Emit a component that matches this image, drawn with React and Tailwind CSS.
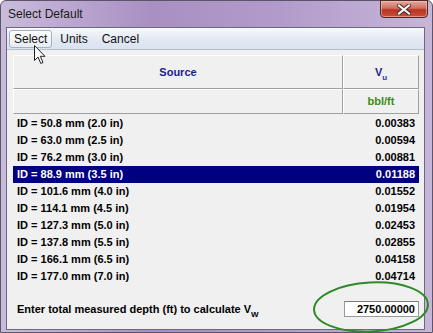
import React from 'react';

const rows = [
    ['ID = 50.8 mm (2.0 in)', '0.00383'],
    ['ID = 63.0 mm (2.5 in)', '0.00594'],
    ['ID = 76.2 mm (3.0 in)', '0.00881'],
    ['ID = 88.9 mm (3.5 in)', '0.01188'],
    ['ID = 101.6 mm (4.0 in)', '0.01552'],
    ['ID = 114.1 mm (4.5 in)', '0.01954'],
    ['ID = 127.3 mm (5.0 in)', '0.02453'],
    ['ID = 137.8 mm (5.5 in)', '0.02855'],
    ['ID = 166.1 mm (6.5 in)', '0.04158'],
    ['ID = 177.0 mm (7.0 in)', '0.04714'],
];

const selected = 3;

export default function App() {
    return (
        <div className="relative w-[433px] h-[333px] overflow-hidden bg-white">
            <div className="flex flex-col w-[433px] h-[333px] rounded-tl-[6px] rounded-tr-[6px] border border-[#5d536b] bg-[linear-gradient(to_right,#c9bcda,#a98fc3_35%,#b29bcb_65%,#c6b6d8)]">
                {/* Title bar */}
                <div className="flex items-start h-[26px] shrink-0">
                    <span className="pl-[7px] pt-[6px] text-[12px] leading-[14px] text-[#1b1b1b] font-['Liberation_Sans',sans-serif]">Select Default</span>
                    <div className="ml-auto mr-[4px] w-[48px] h-[18px] -mt-px rounded-b-[4px] border border-[#4d2a2a] bg-[linear-gradient(to_bottom,#e7a79a,#d0705f_45%,#b8341f_55%,#c8503a)] flex items-center justify-center shadow-[inset_0_0_0_1px_rgba(255,210,200,0.5)]">
                        <svg width="14" height="11" viewBox="0 0 14 11">
                            <path d="M2 1.5 L12 9.5 M12 1.5 L2 9.5" stroke="#3a2a2a" strokeWidth="4" strokeLinecap="square" />
                            <path d="M2 1.5 L12 9.5 M12 1.5 L2 9.5" stroke="#f4f4f4" strokeWidth="2.2" strokeLinecap="square" />
                        </svg>
                    </div>
                </div>

                <div className="flex flex-1 min-h-0">
                    <div className="w-[6px] shrink-0 border-r border-[#6e6380]" />
                    <div className="flex flex-col w-[418px] border border-[#6a6a7a] border-l-0">
                        {/* Menu bar */}
                        <div className="flex items-center h-[22px] shrink-0 bg-[linear-gradient(to_bottom,#f7f9fc,#e4eaf4_50%,#d9e2ef)] border-b border-[#b7bfcd] text-[12px] text-[#111] font-['Liberation_Sans',sans-serif] pl-[2px]">
                            <div className="h-[18px] px-[4px] flex items-center rounded-[3px] border border-[#a8b1c0] bg-[linear-gradient(to_bottom,#fbfcfd,#e8ecf2)]">Select</div>
                            <div className="pl-[8px] pr-[8px]">Units</div>
                            <div className="pl-[6px]">Cancel</div>
                        </div>

                        {/* Content */}
                        <div className="flex-1 bg-[#f0f0f0] pl-[6px] pr-[5px] pt-[5px] font-['Liberation_Sans',sans-serif] text-[11px] font-bold">
                            <div className="flex h-[34px]">
                                <div className="w-[330px] flex items-center justify-center border-t border-l border-white border-b border-r border-b-[#a0a0a0] border-r-[#a0a0a0] text-[#1c1c8e]">Source</div>
                                <div className="flex-1 flex items-center justify-center border-t border-l border-white border-b border-r border-b-[#a0a0a0] border-r-[#a0a0a0] text-[#1c1c8e]">
                                    <span>V<sub className="text-[8px] text-[#3a2fb0] align-[-2px]">u</sub></span>
                                </div>
                            </div>
                            <div className="flex h-[25px]">
                                <div className="w-[330px] border-t border-l border-white border-b border-r border-b-[#a0a0a0] border-r-[#a0a0a0]" />
                                <div className="flex-1 flex items-center justify-center border-t border-l border-white border-b border-r border-b-[#a0a0a0] border-r-[#a0a0a0] text-[#3b8a12]">bbl/ft</div>
                            </div>
                            <div className="mt-px">
                                {rows.map(([label, value], i) => (
                                    <div
                                        key={label}
                                        className={`flex items-center justify-between h-[17px] pl-[4px] pr-[4px] ${i === selected ? 'bg-[#000080] text-white' : 'text-black'}`}
                                    >
                                        <span>{label}</span>
                                        <span>{value}</span>
                                    </div>
                                ))}
                            </div>
                            <div className="flex items-center justify-between mt-[16px] pl-[4px]">
                                <span>Enter total measured depth (ft) to calculate V<sub className="text-[8px] align-[-2px]">W</sub></span>
                                <div className="w-[75px] h-[16px] border border-[#9a9a9a] border-t-[#7a7a7a] bg-white flex items-center justify-end pr-[3px]">2750.00000</div>
                            </div>
                        </div>
                    </div>
                    <div className="flex-1" />
                </div>
                <div className="h-[2px] shrink-0" />
            </div>

            {/* Green annotation ellipse */}
            <svg className="absolute left-0 top-0 pointer-events-none" width="433" height="333">
                <ellipse cx="371" cy="307" rx="57" ry="24.5" fill="none" stroke="#2e8a26" strokeWidth="2" transform="rotate(-3 371 307)" />
            </svg>

            {/* Mouse cursor */}
            <svg className="absolute left-[34px] top-[45px]" width="13" height="20" viewBox="0 0 13 20">
                <path d="M0.5 0.5 L0.5 15.5 L4 12 L6.8 18.5 L9 17.5 L6.3 11.3 L11 11.3 Z" fill="#ffffff" stroke="#222" strokeWidth="1" strokeLinejoin="miter" />
            </svg>
        </div>
    );
}
